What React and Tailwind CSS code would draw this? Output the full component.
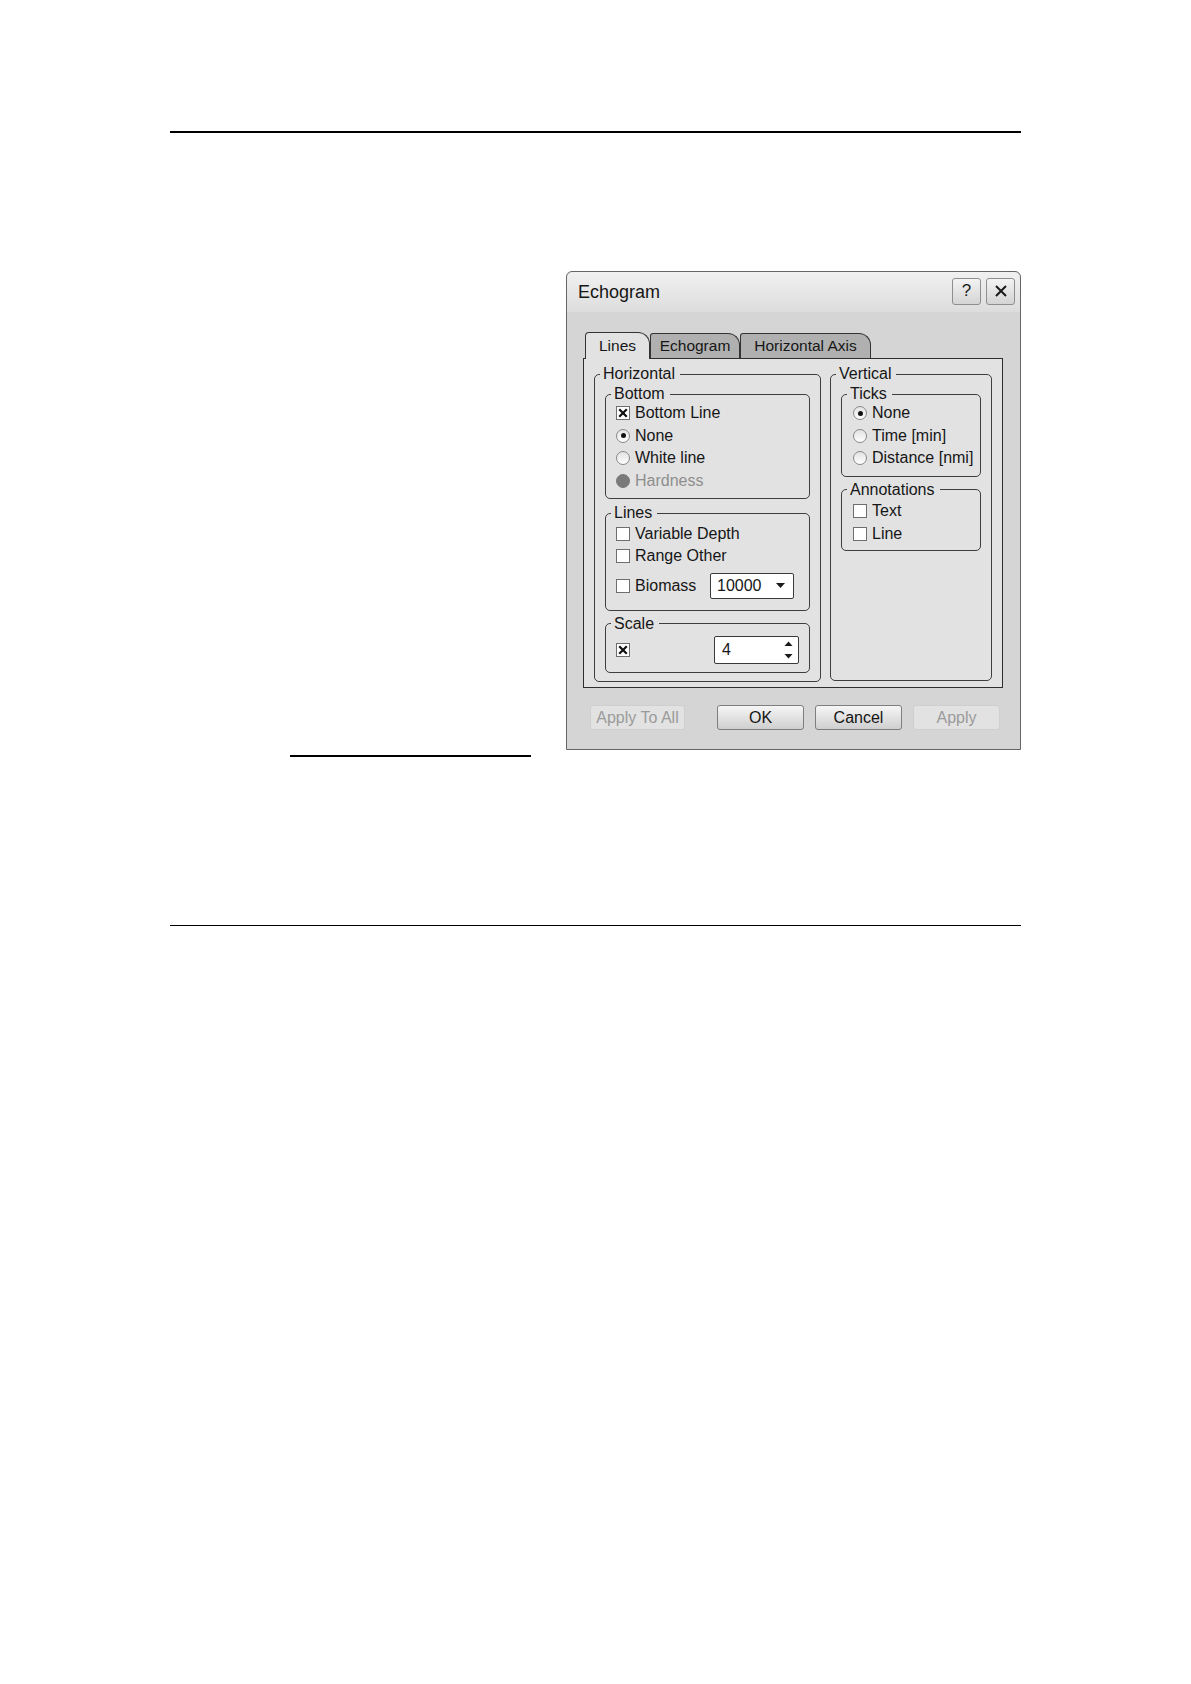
import React from 'react';

const FONT = { fontFamily: '"Liberation Sans", Arial, sans-serif' };

const Group = ({ label, className = '', children }) => (
  <fieldset className={`border border-[#3e3e3e] rounded-[5px] min-w-0 ${className}`}>
    <legend className="ml-[5px] pl-[3px] pr-[5px] text-[16px] leading-[18px] text-[#161616]">{label}</legend>
    {children}
  </fieldset>
);

const CheckBox = ({ checked }) => (
  <span className="w-[14px] h-[14px] shrink-0 border border-[#6e6e6e] bg-white flex items-center justify-center">
    {checked && (
      <svg width="10" height="10" viewBox="0 0 10 10">
        <path d="M2 2 L8 8 M8 2 L2 8" stroke="#111" strokeWidth="2.2" strokeLinecap="square" />
      </svg>
    )}
  </span>
);

const Radio = ({ checked, disabled }) => (
  <span
    className={`w-[14px] h-[14px] shrink-0 rounded-full flex items-center justify-center ${
      disabled ? 'bg-[#7a7a7a] border border-[#7a7a7a]' : 'bg-linear-to-b from-[#e2e2e2] to-white border border-[#888]'
    }`}
  >
    {checked && <span className="w-[5px] h-[5px] rounded-full bg-[#111]" />}
  </span>
);

const Row = ({ children, className = '' }) => (
  <div className={`h-[22.6px] flex items-center gap-[5px] text-[16px] leading-none ${className}`}>{children}</div>
);

const Tab = ({ label, active, width }) =>
  active ? (
    <div
      className={`${width} h-[27px] -mb-px relative z-10 bg-[#e2e2e2] border border-b-0 border-[#333] rounded-tl-[4px] rounded-tr-[12px] flex items-center justify-center text-[15.5px] text-[#161616]`}
    >
      {label}
    </div>
  ) : (
    <div
      className={`${width} h-[25px] bg-[#b0b0b0] border border-b-0 border-[#333] rounded-tl-[3px] rounded-tr-[12px] flex items-center justify-center text-[15.5px] text-[#161616]`}
    >
      {label}
    </div>
  );

const DlgButton = ({ label, disabled, width }) => (
  <button
    type="button"
    className={`${width} h-[25px] rounded-[3px] text-[16px] leading-none ${
      disabled
        ? 'bg-[#e2e2e2] border border-[#cfcfcf] text-[#9a9a9a]'
        : 'bg-linear-to-b from-[#f6f6f6] to-[#cfcfcf] border border-[#7e7e7e] text-[#141414]'
    }`}
  >
    {label}
  </button>
);

const TitleButton = ({ children }) => (
  <button
    type="button"
    className="w-[29px] h-[27px] rounded-[3px] border border-[#8e8e8e] bg-linear-to-b from-[#f3f3f3] to-[#d4d4d4] flex items-center justify-center text-[17px] text-[#1a1a1a]"
  >
    {children}
  </button>
);

const EchogramDialog = () => (
  <div className="w-[455px] h-[479px] border border-[#666] rounded-t-[6px] bg-[#d5d5d5] flex flex-col text-[#161616]">
    <div className="h-[40px] pl-[11px] pr-[5px] flex items-center justify-between rounded-t-[6px] bg-linear-to-b from-[#f1f1f1] to-[#dddddd]">
      <span className="text-[18px]">Echogram</span>
      <div className="flex gap-[5px] mt-[-2px]">
        <TitleButton>?</TitleButton>
        <TitleButton>
          <svg width="14" height="14" viewBox="0 0 14 14">
            <path d="M2 2 L12 12 M12 2 L2 12" stroke="#1a1a1a" strokeWidth="2" />
          </svg>
        </TitleButton>
      </div>
    </div>

    <div className="px-[16px] mt-[20px]">
      <div className="flex items-end ml-[2px] h-[26px]">
        <Tab label="Lines" active width="w-[65px]" />
        <Tab label="Echogram" width="w-[90px]" />
        <Tab label="Horizontal Axis" width="w-[131px]" />
      </div>

      <div className="w-[420px] h-[330px] border border-[#2e2e2e] bg-[#e2e2e2] pt-[6px] px-[10px] flex items-start gap-[9px]">
        <Group label="Horizontal" className="w-[227px]">
          <div className="px-[10px] pb-[8px]">
            <Group label="Bottom" className="mt-[2px]">
              <div className="pl-[10px] pb-[6px] -mt-px">
                <Row>
                  <CheckBox checked />
                  <span>Bottom Line</span>
                </Row>
                <Row>
                  <Radio checked />
                  <span>None</span>
                </Row>
                <Row>
                  <Radio />
                  <span>White line</span>
                </Row>
                <Row>
                  <Radio disabled />
                  <span className="text-[#8e8e8e]">Hardness</span>
                </Row>
              </div>
            </Group>

            <Group label="Lines" className="mt-[5px]">
              <div className="pl-[10px] pb-[11px]">
                <Row>
                  <CheckBox />
                  <span>Variable Depth</span>
                </Row>
                <Row>
                  <CheckBox />
                  <span>Range Other</span>
                </Row>
                <div className="mt-[5px] h-[26px] flex items-center gap-[5px] text-[16px] leading-none">
                  <CheckBox />
                  <span className="w-[70px]">Biomass</span>
                  <div className="w-[84px] h-[26px] bg-white border border-[#3a3a3a] rounded-[2px] flex items-center justify-between pl-[6px] pr-[8px]">
                    <span>10000</span>
                    <svg width="9" height="5" viewBox="0 0 9 5">
                      <path d="M0 0 L9 0 L4.5 5 Z" fill="#1a1a1a" />
                    </svg>
                  </div>
                </div>
              </div>
            </Group>

            <Group label="Scale" className="mt-[4px]">
              <div className="px-[10px] pb-[8px] mt-[3px] flex items-center justify-between">
                <CheckBox checked />
                <div className="w-[85px] h-[28px] bg-white border border-[#3a3a3a] rounded-[2px] flex items-center justify-between pl-[7px] pr-[5px] text-[16px] leading-none">
                  <span>4</span>
                  <svg width="9" height="18" viewBox="0 0 9 18">
                    <path d="M0.5 5 L8.5 5 L4.5 0.5 Z" fill="#1a1a1a" />
                    <path d="M0.5 13 L8.5 13 L4.5 17.5 Z" fill="#1a1a1a" />
                  </svg>
                </div>
              </div>
            </Group>
          </div>
        </Group>

        <Group label="Vertical" className="w-[162px] self-stretch mb-[6px]">
          <div className="px-[10px]">
            <Group label="Ticks" className="mt-[2px]">
              <div className="pl-[11px] pb-[6px] -mt-px">
                <Row>
                  <Radio checked />
                  <span>None</span>
                </Row>
                <Row>
                  <Radio />
                  <span>Time [min]</span>
                </Row>
                <Row>
                  <Radio />
                  <span className="whitespace-nowrap">Distance [nmi]</span>
                </Row>
              </div>
            </Group>

            <Group label="Annotations" className="mt-[4px]">
              <div className="pl-[11px] pb-[5px] mt-px">
                <Row>
                  <CheckBox />
                  <span>Text</span>
                </Row>
                <Row>
                  <CheckBox />
                  <span>Line</span>
                </Row>
              </div>
            </Group>
          </div>
        </Group>
      </div>
    </div>

    <div className="mt-[17px] pl-[23px] flex items-center">
      <DlgButton label="Apply To All" disabled width="w-[95px]" />
      <div className="ml-[32px] flex gap-[11px]">
        <DlgButton label="OK" width="w-[87px]" />
        <DlgButton label="Cancel" width="w-[87px]" />
        <DlgButton label="Apply" disabled width="w-[87px]" />
      </div>
    </div>
  </div>
);

export default function App() {
  return (
    <div className="w-[1191px] min-h-[1684px] bg-white" style={FONT}>
      <div className="pt-[131px] px-[170px]">
        <div className="h-[2px] bg-black" />

        <div className="mt-[138px] flex justify-end">
          <EchogramDialog />
        </div>

        <div className="mt-[5px] ml-[120px] w-[241px] h-[1.5px] bg-black" />

        <div className="mt-[168px] h-px bg-black" />
      </div>
    </div>
  );
}
